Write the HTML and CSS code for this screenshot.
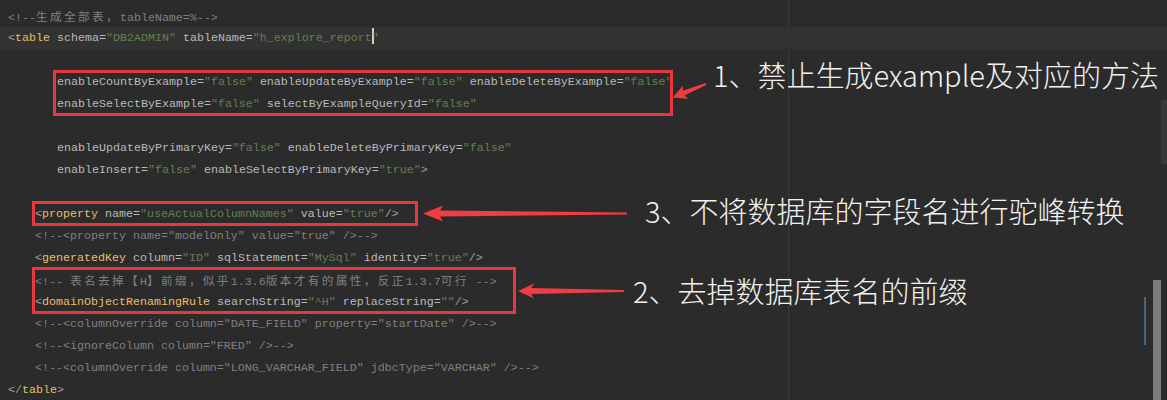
FILE: index.html
```html
<!DOCTYPE html>
<html lang="zh-CN">
<head>
    <meta charset="UTF-8">
    <title>generatorConfig.xml</title>
    <link rel="stylesheet" href="styles.css">
</head>
<body>
    <div class="editor">
        <div class="code">
            <div class="line l0 comment">&lt;!--<span class="cjk">生成全部表，</span>tableName=%--&gt;</div>
            <div class="line l0 current"><span class="br">&lt;</span><span class="tag">table</span> <span class="attr">schema=</span><span class="val">"DB2ADMIN"</span> <span class="attr">tableName=</span><span class="val">"h_explore_report<span class="caret"></span>"</span></div>
            <div class="line"></div>
            <div class="line l2"><span class="attr">enableCountByExample=</span><span class="val">"false"</span> <span class="attr">enableUpdateByExample=</span><span class="val">"false"</span> <span class="attr">enableDeleteByExample=</span><span class="val">"false"</span></div>
            <div class="line l2"><span class="attr">enableSelectByExample=</span><span class="val">"false"</span> <span class="attr">selectByExampleQueryId=</span><span class="val">"false"</span></div>
            <div class="line"></div>
            <div class="line l2"><span class="attr">enableUpdateByPrimaryKey=</span><span class="val">"false"</span> <span class="attr">enableDeleteByPrimaryKey=</span><span class="val">"false"</span></div>
            <div class="line l2"><span class="attr">enableInsert=</span><span class="val">"false"</span> <span class="attr">enableSelectByPrimaryKey=</span><span class="val">"true"</span><span class="br">&gt;</span></div>
            <div class="line"></div>
            <div class="line l1"><span class="br">&lt;</span><span class="tag">property</span> <span class="attr">name=</span><span class="val">"useActualColumnNames"</span> <span class="attr">value=</span><span class="val">"true"</span><span class="br">/&gt;</span></div>
            <div class="line l1 comment">&lt;!--&lt;property name="modelOnly" value="true" /&gt;--&gt;</div>
            <div class="line l1"><span class="br">&lt;</span><span class="tag">generatedKey</span> <span class="attr">column=</span><span class="val">"ID"</span> <span class="attr">sqlStatement=</span><span class="val">"MySql"</span> <span class="attr">identity=</span><span class="val">"true"</span><span class="br">/&gt;</span></div>
            <div class="line l1 comment">&lt;!-- <span class="cjk">表名去掉【</span>H<span class="cjk">】前缀，似乎</span>1.3.6<span class="cjk">版本才有的属性，反正</span>1.3.7<span class="cjk">可行</span> --&gt;</div>
            <div class="line l1"><span class="br">&lt;</span><span class="tag">domainObjectRenamingRule</span> <span class="attr">searchString=</span><span class="val">"^H"</span> <span class="attr">replaceString=</span><span class="val">""</span><span class="br">/&gt;</span></div>
            <div class="line l1 comment">&lt;!--&lt;columnOverride column="DATE_FIELD" property="startDate" /&gt;--&gt;</div>
            <div class="line l1 comment">&lt;!--&lt;ignoreColumn column="FRED" /&gt;--&gt;</div>
            <div class="line l1 comment">&lt;!--&lt;columnOverride column="LONG_VARCHAR_FIELD" jdbcType="VARCHAR" /&gt;--&gt;</div>
            <div class="line l0"><span class="br">&lt;/</span><span class="tag">table</span><span class="br">&gt;</span></div>
        </div>

        <!-- 标注 -->
        <div class="box box-1"></div>
        <div class="box box-3"></div>
        <div class="box box-2"></div>

        <svg class="arrows" width="1167" height="400" viewBox="0 0 1167 400">
            <g transform="translate(706,84) rotate(-22)">
                <polygon points="-36,0 -22,-7 -24,-2.5 0,-1 0,1 -24,2.5 -22,7"/>
            </g>
            <g transform="translate(627,213.5)">
                <polygon points="-204,0 -184,-8 -187,-3 0,-1 0,1 -187,3 -184,8"/>
            </g>
            <g transform="translate(624,291)">
                <polygon points="-106,0 -90,-7.5 -93,-3 0,-1 0,1 -93,3 -90,7.5"/>
            </g>
        </svg>

        <div class="note note-1">1、禁止生成example及对应的方法</div>
        <div class="note note-3">3、不将数据库的字段名进行驼峰转换</div>
        <div class="note note-2">2、去掉数据库表名的前缀</div>

        <!-- 右侧滚动条 -->
        <div class="stripe"></div>
        <div class="marker"></div>
        <div class="thumb"></div>
    </div>
</body>
</html>
```

FILE: styles.css
```css
body {
    margin: 0;
    background-color: #2b2b2b;
    overflow: hidden;
}
.editor {
    position: relative;
    width: 1167px;
    height: 400px;
    overflow: hidden;
    background-color: #2b2b2b;
    background-image: linear-gradient(to right, transparent 788px, #393939 788px, #393939 789px, transparent 789px);
}
.code {
    padding-top: 5px;
    font-family: "Liberation Mono", "Noto Sans CJK SC", monospace;
    font-size: 11.67px;
    color: #bababa;
}
.line {
    height: 22px;
    line-height: 22px;
    white-space: pre;
}
.l0 {
    padding-left: 8px;
}
.l1 {
    padding-left: 35px;
}
.l2 {
    padding-left: 57px;
}
.current {
    background-color: #323232;
}
.comment {
    color: #808080;
}
.cjk {
    font-family: "Noto Sans CJK SC", sans-serif;
    letter-spacing: 2.33px;
}
.br {
    color: #a0a0a0;
}
.tag {
    color: #e8bf6a;
}
.attr {
    color: #bababa;
}
.val {
    color: #62804f;
}
.caret {
    display: inline-block;
    width: 2px;
    height: 16px;
    margin-right: -2px;
    vertical-align: -3px;
    background-color: #d0d0d0;
}

/* 红框 */
.box {
    position: absolute;
    border: 3px solid #e8383d;
    box-sizing: border-box;
}
.box-1 {
    left: 53px;
    top: 70px;
    width: 620px;
    height: 46px;
}
.box-3 {
    left: 32px;
    top: 201px;
    width: 386px;
    height: 25px;
}
.box-2 {
    left: 32px;
    top: 267px;
    width: 484px;
    height: 47px;
}
.arrows {
    position: absolute;
    left: 0;
    top: 0;
    fill: #f03c42;
}
.note {
    position: absolute;
    font-family: "Noto Sans CJK SC", sans-serif;
    font-size: 29px;
    font-weight: 300;
    line-height: 36px;
    color: #f2f2f2;
    white-space: nowrap;
}
.note-1 {
    left: 713px;
    top: 56px;
}
.note-3 {
    left: 645px;
    top: 192px;
}
.note-2 {
    left: 633px;
    top: 272px;
}
.stripe {
    position: absolute;
    right: 0;
    top: 100px;
    width: 6px;
    height: 64px;
    background-color: #383838;
}
.marker {
    position: absolute;
    left: 1144px;
    top: 297px;
    width: 2px;
    height: 48px;
    background-color: #45628a;
}
.thumb {
    position: absolute;
    left: 1153px;
    top: 280px;
    width: 8px;
    height: 120px;
    background-color: #7c7c7c;
}
```
